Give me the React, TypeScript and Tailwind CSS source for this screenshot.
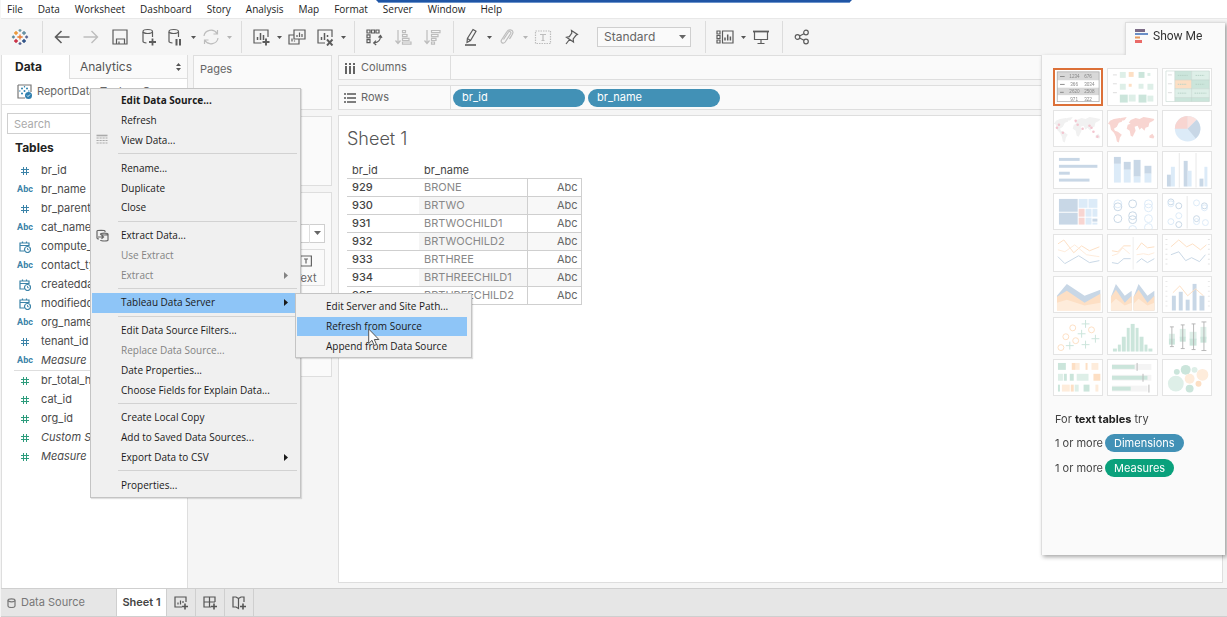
import type { ReactNode } from "react";
import clsx from "clsx";

type FieldType = "num" | "abc" | "date";

interface Field {
  name: string;
  type: FieldType;
  italic?: boolean;
}

interface MenuEntry {
  label: string;
  bold?: boolean;
  disabled?: boolean;
  submenu?: boolean;
  active?: boolean;
  icon?: ReactNode;
}

const DIMENSIONS: Field[] = [
  { name: "br_id", type: "num" },
  { name: "br_name", type: "abc" },
  { name: "br_parent_id", type: "num" },
  { name: "cat_name", type: "abc" },
  { name: "compute_date", type: "date" },
  { name: "contact_type", type: "abc" },
  { name: "createddate", type: "date" },
  { name: "modifieddate", type: "date" },
  { name: "org_name", type: "abc" },
  { name: "tenant_id", type: "num" },
  { name: "Measure Names", type: "abc", italic: true },
];

const MEASURES: Field[] = [
  { name: "br_total_hours", type: "num" },
  { name: "cat_id", type: "num" },
  { name: "org_id", type: "num" },
  { name: "Custom SQL", type: "num", italic: true },
  { name: "Measure Values", type: "num", italic: true },
];

const ROWS = [
  ["929", "BRONE"],
  ["930", "BRTWO"],
  ["931", "BRTWOCHILD1"],
  ["932", "BRTWOCHILD2"],
  ["933", "BRTHREE"],
  ["934", "BRTHREECHILD1"],
  ["935", "BRTHREECHILD2"],
];

const APP_MENU = ["File", "Data", "Worksheet", "Dashboard", "Story", "Analysis", "Map", "Format", "Server", "Window", "Help"];

function Icon({ children, size = 18, className }: { children: ReactNode; size?: number; className?: string }) {
  return (
    <svg
      width={size}
      height={size}
      viewBox={`0 0 ${size} ${size}`}
      fill="none"
      stroke="currentColor"
      strokeWidth="1.2"
      className={clsx("shrink-0", className)}
      aria-hidden="true"
    >
      {children}
    </svg>
  );
}

function Logo() {
  const plus = (x: number, y: number, r: number, c: string) => (
    <path key={`${x}-${y}`} d={`M${x - r} ${y}h${r * 2}M${x} ${y - r}v${r * 2}`} stroke={c} strokeWidth="1.3" />
  );
  return (
    <Icon>
      {plus(9, 9, 2.6, "#e8762c")}
      {plus(5, 5, 1.9, "#eb912c")}
      {plus(13, 5, 1.9, "#5b879b")}
      {plus(5, 13, 1.9, "#c72037")}
      {plus(13, 13, 1.9, "#1f457e")}
      {plus(9, 2.4, 1.5, "#7099a6")}
      {plus(9, 15.6, 1.5, "#5b6591")}
      {plus(2.4, 9, 1.5, "#5b879b")}
      {plus(15.6, 9, 1.5, "#5b6591")}
    </Icon>
  );
}

function Caret({ dim }: { dim?: boolean }) {
  return (
    <button type="button" aria-label="More options" className={clsx("flex h-6 w-[14px] items-center justify-center", dim ? "text-[#b5b5b5]" : "text-[#555]")}>
      <svg width="5" height="3" viewBox="0 0 5 3" fill="currentColor">
        <path d="M0 0h5L2.5 3z" />
      </svg>
    </button>
  );
}

function Tool({ label, dim, children }: { label: string; dim?: boolean; children: ReactNode }) {
  return (
    <button type="button" aria-label={label} className={clsx("flex h-6 w-[22px] items-center justify-center", dim ? "text-[#bdbdbd]" : "text-[#5c5c5c]")}>
      <Icon>{children}</Icon>
    </button>
  );
}

function Divider() {
  return <div className="h-8 w-px bg-[#dcdcdc]" />;
}

function Toolbar() {
  return (
    <div role="toolbar" className="flex h-[37px] shrink-0 items-center border-t border-[#e8e8e8] bg-[#f5f5f5]">
      <div className="flex w-[41px] justify-center pr-[3px]">
        <Logo />
      </div>
      <Divider />
      <div className="flex gap-[7px] pl-2">
        <Tool label="Undo"><path d="M16.5 9h-14M8.500 3l-6 6 6 6" strokeWidth="1.6" /></Tool>
        <Tool label="Redo" dim><path d="M1.5 9h14M9.500 3l6 6-6 6" strokeWidth="1.4" /></Tool>
        <Tool label="Save">
          <path d="M2 2h14v14H2zM5.500 16v-5h8v5M8 13.500V16" />
        </Tool>
        <Tool label="New data source">
          <path d="M3 4v9.500c0 .8 1.500 1.300 3.500 1.500M12.500 4v5" />
          <ellipse cx="7.75" cy="3.5" rx="4.75" ry="2" />
          <path d="M12.500 10.500v7M9 14h7" strokeWidth="1.8" />
        </Tool>
      </div>
      <div className="flex pr-[5px] pl-1">
        <Tool label="Pause auto updates">
          <path d="M3 4v9.500c0 .8 1.500 1.300 3.500 1.500M12.500 4v5" />
          <ellipse cx="7.75" cy="3.5" rx="4.75" ry="2" />
          <path d="M10.500 11v6.500M14 11v6.500" strokeWidth="2" />
        </Tool>
        <Caret />
        <Tool label="Run update" dim>
          <path d="M2 8a7 6.500 0 0 1 13-2.500M16 10a7 6.500 0 0 1-13 2.500M15.500 2v4h-4M2.500 16v-4h4" />
        </Tool>
        <Caret dim />
      </div>
      <Divider />
      <div className="flex pl-2">
        <Tool label="New worksheet">
          <path d="M9.500 15H2V2h14v7" />
          <path d="M5.500 12V9M8.500 12V5M11.500 12V7" strokeWidth="1.5" />
          <path d="M14 10.500v7M10.500 14h7" strokeWidth="1.9" />
        </Tool>
        <Caret />
        <Tool label="Duplicate">
          <path d="M6 2h11v9H6zM6 7H1v9h10v-5" />
          <path d="M9 9V7M11.500 9V4.500M14 9V6M4 13.500v-3M6.500 13.500v-1" />
        </Tool>
      </div>
      <div className="flex pr-1 pl-1.5">
        <Tool label="Clear sheet">
          <path d="M9 15H2V2h14v7" />
          <path d="M5.500 12V9M8.500 12V5M11.500 9V7" strokeWidth="1.5" />
          <path d="M11 11.500l5.500 6M16.500 11.500l-5.500 6" strokeWidth="1.9" />
        </Tool>
        <Caret />
      </div>
      <Divider />
      <div className="flex gap-[7px] pr-2.5 pl-2">
        <Tool label="Swap rows and columns">
          <path d="M2 2h3v3H2zM6.500 2h3v3h-3zM11 2h3v3h-3zM2 6.800h3v3H2zM2 11.600h3v3H2z" />
          <path d="M15.500 8c0 4-2.500 6.500-6.500 7M13.500 9.500l2-2 1.500 2.300M11 12.700L8.700 15l2.500 2" />
        </Tool>
        <Tool label="Sort ascending" dim>
          <path d="M4 2v13M1.500 12.500L4 15.500l2.500-3M8.500 2.500h3v2.200h-3zM8.500 6.500h4.500v2.200H8.500zM8.500 10.300h6.500v2.200H8.500zM8.500 14h8.500v2.200H8.500z" />
        </Tool>
        <Tool label="Sort descending" dim>
          <path d="M4 2v13M1.500 12.500L4 15.500l2.500-3M8.500 2.500h8.500v2.200H8.500zM8.500 6.500h6.500v2.200H8.500zM8.500 10.300h4.500v2.200H8.500zM8.500 14h3v2.200h-3z" />
        </Tool>
      </div>
      <Divider />
      <div className="flex pl-1.5">
        <Tool label="Highlight">
          <path d="M11 1.500l3 1.800-5.500 9.200-3.500 2 .4-4zM5.500 10.500l3 2" />
          <path d="M3 17h11" strokeWidth="1.6" />
        </Tool>
        <Caret />
        <Tool label="Group members" dim>
          <path d="M5.500 11.500l5-7.500c1-1.300 3 0 2.200 1.500l-5.500 8.500c-2 2.500-5 .5-3.700-2l5.500-8.500c1.500-2.500 5.500-2 6 .5.300 2-2.500 5-3.500 7" />
        </Tool>
        <Caret dim />
        <Tool label="Show mark labels" dim>
          <path d="M1.500 3h15v12.500h-15z" strokeDasharray="1.5 1" />
          <path d="M6 6.500h6M9 6.500v6M7.500 12.500h3" />
        </Tool>
      </div>
      <div className="flex items-center gap-[15px] pr-3.5 pl-1.5">
        <Tool label="Fix axes">
          <path d="M9.500 2.500l6 4-1.500.8-2.800 3.700.3 3-7-4.700 2.800-.7L9.800 5zM7.500 11.500L4 16" />
        </Tool>
        <div className="relative">
          <select aria-label="Fit" className="block h-5 w-[94px] appearance-none border border-[#cfcfcf] bg-[#fafafa] pl-1.5 text-xs leading-4 text-[#666]">
            <option>Standard</option>
          </select>
          <span className="pointer-events-none absolute inset-y-0 right-0 flex w-[17px] items-center justify-center">
            <svg width="7" height="4" viewBox="0 0 7 4" fill="#666">
              <path d="M0 0h7L3.500 4z" />
            </svg>
          </span>
        </div>
      </div>
      <Divider />
      <div className="flex pr-2.5 pl-2">
        <Tool label="Show/hide cards">
          <path d="M6.500 3H17v12H6.500zM1 3h3v3H1zM1 7.500h3v3H1zM1 12h3v3H1z" />
          <path d="M9 12.500v-3M11.700 12.500v-6M14.400 12.500V8.500" strokeWidth="1.5" />
        </Tool>
        <Caret />
        <Tool label="Presentation mode">
          <path d="M1 3.500h16" strokeWidth="1.8" />
          <path d="M2.500 3.500v8h13v-8M9 11.500V15M5.500 15.500h7" />
        </Tool>
      </div>
      <Divider />
      <div className="pl-2">
        <Tool label="Share">
          <circle cx="4.5" cy="9" r="2.3" />
          <circle cx="13" cy="4.5" r="2.3" />
          <circle cx="13" cy="13.5" r="2.3" />
          <path d="M6.600 8l4.300-2.300M6.600 10l4.300 2.300" />
        </Tool>
      </div>
    </div>
  );
}

function FieldIcon({ type }: { type: FieldType }) {
  if (type === "abc") return <span className="font-[Roboto] text-[9px] font-bold">Abc</span>;
  if (type === "num")
    return (
      <Icon size={10}>
        <path d="M3.500 1v8M6.500 1v8M1 3.500h8M1 6.500h8" strokeWidth="1" />
      </Icon>
    );
  return (
    <Icon size={12}>
      <path d="M5 10H1V2h9v3M1 4.500h9M3.500.5v2M7.500.5v2" />
      <circle cx="8.5" cy="8.5" r="3" />
      <path d="M8.500 7v1.700h1.300" strokeWidth=".9" />
    </Icon>
  );
}

function FieldList({ fields, tone }: { fields: Field[]; tone: string }) {
  return (
    <ul>
      {fields.map((f) => (
        <li key={f.name} className="flex h-[19px] items-center">
          <span className={clsx("flex w-5 justify-center", tone)}>
            <FieldIcon type={f.type} />
          </span>
          <span className={clsx("ml-1.5 whitespace-nowrap", f.italic && "italic")}>{f.name}</span>
        </li>
      ))}
    </ul>
  );
}

function DataPane() {
  return (
    <aside className="w-[187px] shrink-0 overflow-hidden border-x border-[#dedede] bg-white text-[#4a4a4a]">
      <div className="flex h-6 text-xs">
        <button type="button" className="w-[67px] pr-3.5 font-bold text-[#222]">
          Data
        </button>
        <button type="button" className="flex flex-1 items-center justify-between border-b border-l border-[#dedede] bg-[#fafafa] pr-1.5 pl-2.5 text-[#555]">
          Analytics
          <svg width="5" height="8" viewBox="0 0 5 8" fill="#555">
            <path d="M0 3l2.500-3L5 3zM0 5l2.500 3L5 5z" />
          </svg>
        </button>
      </div>
      <div className="flex h-[26px] items-center gap-[5px] border-b border-[#e2e2e2] pl-[15px] text-[11px] whitespace-nowrap text-[#666]">
        <Icon size={15}>
          <path d="M1 1h13v7M8 14H1V1" stroke="#777" />
          <path d="M4 4.500h2M5 3.500v2M9 4.500h2M10 3.500v2M4 9.500h2M5 8.500v2M6.500 7h2M7.500 6v2M7.500 2v1.500M2 7h1.500M11 7h1.500" stroke="#3d8cb5" />
          <circle cx="11.5" cy="11.5" r="3.5" fill="#2f7fae" stroke="none" />
          <path d="M10 11.500l1 1 2-2" stroke="#fff" strokeWidth=".9" />
        </Icon>
        ReportData_Tenkan_Q
      </div>
      <div className="px-[5px] pt-2">
        <input type="search" aria-label="Search" placeholder="Search" className="block h-[21px] w-full border border-[#cfcfcf] px-1.5 text-[11px] placeholder:text-[#aaa]" />
      </div>
      <h2 className="mt-1.5 pl-[13px] text-xs leading-4 font-bold text-[#222]">Tables</h2>
      <div className="mt-[5px] text-[11px]">
        <div className="pl-[13px]">
          <FieldList fields={DIMENSIONS} tone="text-[#3b83a8]" />
        </div>
        <div className="ml-3 border-t border-[#dedede] pl-px">
          <FieldList fields={MEASURES} tone="text-[#2c9c7c]" />
        </div>
      </div>
    </aside>
  );
}

function Cards() {
  return (
    <div className="flex w-[139px] shrink-0 flex-col gap-[6px] text-[11px] text-[#666] *:border *:border-[#dedede] *:bg-[#fafafa]">
      <section className="h-[55px] px-1.5 pt-[5px]">Pages</section>
      <section className="h-[70px] px-1.5 pt-[5px]">Filters</section>
      <section className="flex h-[185px] flex-col px-1.5 pt-[5px]">
        Marks
        <div className="relative mt-[9px]">
          <select aria-label="Mark type" className="block h-[19px] w-full appearance-none border border-[#cfcfcf] bg-white pl-6">
            <option>Automatic</option>
          </select>
          <span className="pointer-events-none absolute inset-y-0 right-0 flex w-4 items-center justify-center border-l border-[#dedede]">
            <svg width="7" height="4" viewBox="0 0 7 4" fill="#666">
              <path d="M0 0h7L3.500 4z" />
            </svg>
          </span>
        </div>
        <div className="mt-1.5 grid grid-cols-3 gap-1">
          {["Color", "Size", "Text"].map((m) => (
            <button key={m} type="button" className="flex h-[37px] flex-col items-center gap-[5px] border border-[#dedede] bg-[#fafafa] pt-[5px] leading-3">
              <Icon size={12}>
                <path d="M.6 1h10.800v10H.6zM4 4h4M6 4v4.500" />
              </Icon>
              {m}
            </button>
          ))}
        </div>
      </section>
    </div>
  );
}

function Shelf({ label, icon, pills }: { label: string; icon: ReactNode; pills: string[] }) {
  return (
    <div className="flex h-[25px] border border-[#dedede] bg-[#fafafa] text-[11px] text-[#666]">
      <div className="flex w-28 items-center gap-[5px] border-r border-[#dedede] pl-[5px]">
        <Icon size={12} className="text-[#555]">
          {icon}
        </Icon>
        {label}
      </div>
      <div className="flex items-center gap-[3px] pl-0.5">
        {pills.map((p) => (
          <span key={p} className="flex h-[18px] w-[132px] items-center rounded-full bg-[#4291b6] pl-[9px] text-white">
            {p}
          </span>
        ))}
      </div>
    </div>
  );
}

function Sheet() {
  return (
    <main className="flex-1 border border-[#dedede] bg-white pl-2">
      <h1 className="pt-2.5 text-lg leading-[26px] font-light text-[#555]">Sheet 1</h1>
      <table className="mt-2.5 border-collapse text-[11px] leading-4 text-[#444]">
        <thead>
          <tr className="h-4 text-left leading-[14px]">
            <th className="w-[72px] p-0 pl-[5px] font-normal">br_id</th>
            <th className="w-[108px] p-0 pl-[5px] font-normal">br_name</th>
            <th className="w-[54px] p-0" aria-label="Value" />
          </tr>
        </thead>
        <tbody>
          {ROWS.map(([id, name]) => (
            <tr key={id} className="group h-[18px] border-y border-[#cfcfcf]">
              <td className="p-0 pl-[5px] font-medium">{id}</td>
              <td className="p-0 pl-[5px] text-[#888] group-even:bg-[#f5f5f5]">{name}</td>
              <td className="border-x border-[#cfcfcf] p-0 pr-[3px] text-right text-[#666] group-even:bg-[#f8f8f8]">Abc</td>
            </tr>
          ))}
        </tbody>
      </table>
    </main>
  );
}

const G1 = "#cbe5db";
const G2 = "#deefe8";
const O1 = "#fddfc4";
const O2 = "#feecdb";
const B1 = "#c8d7e6";
const B2 = "#dcebf8";
const R1 = "#f8d5d1";

type Box = [number, number, number, number, string];

function Boxes({ items }: { items: Box[] }) {
  return (
    <>
      {items.map(([x, y, w, h, c], i) => (
        <rect key={i} x={x} y={y} width={w} height={h} fill={c} />
      ))}
    </>
  );
}

function Rings({ items }: { items: [number, number, string][] }) {
  return (
    <>
      {items.map(([cx, cy, c], i) => (
        <circle key={i} cx={cx} cy={cy} r="4" fill="none" stroke={c} />
      ))}
    </>
  );
}

const LAND =
  "M2 10l4-2 6-1 3 1-1 3-3 1-2 4-3 2 1 2 3 1 4 3-2 3-1 5-2-1-1-5-2-4-3-3-1-5-2-1zM13 7l6-1-2 3-2 1zM21 12l2-3 5-2 4 1 4-2 6 1 5 1-1 2-4 2-1 4-3 1-1 3-3-3-2 2-2-4-3 1 1 4-3 6-2-1-1-5-3-2 1-4 3-1zM42 25l3-2 2 3-1 2-4-1z";

const THUMBS: { name: string; art: ReactNode }[] = [
  {
    name: "text table",
    art: (
      <>
        <Boxes items={[[2, 2, 45, 9, "#d8d8d8"], [2, 19, 45, 8, "#d8d8d8"]]} />
        <rect x="2" y="2" width="45" height="32" fill="none" stroke="#a8a8a8" strokeWidth=".8" />
        <path d="M5 7h5M5 15.500h5M5 24h4" stroke="#888" />
        <g fill="#888" fontSize="5" fontFamily="Liberation Sans">
          <text x="15" y="9">1234</text>
          <text x="31" y="9">676</text>
          <text x="16" y="17">366</text>
          <text x="31" y="17">3034</text>
          <text x="15" y="25">2620</text>
          <text x="31" y="25">2508</text>
          <text x="16" y="33">971</text>
          <text x="31" y="33">322</text>
        </g>
      </>
    ),
  },
  {
    name: "heat map",
    art: (
      <>
        <Boxes items={[[12, 3, 6, 6, G2], [21, 3, 5, 5, O1], [31, 3, 6, 6, G1], [40, 4, 3, 3, G2], [12, 15, 6, 6, G2], [21, 15, 3, 3, O1], [31, 15, 5, 5, G2], [40, 15, 6, 6, G2], [12, 26, 8, 8, G1], [21, 26, 7, 7, G2], [31, 26, 8, 8, G1], [40, 27, 6, 6, G2]]} />
        <path d="M5 6h4M5 15h4M5 24h4" stroke="#ddd" />
      </>
    ),
  },
  {
    name: "highlight table",
    art: (
      <>
        <Boxes items={[[12, 2, 17, 9, G1], [29, 2, 18, 9, G2], [12, 11, 17, 9, O1], [29, 11, 18, 9, G1], [12, 20, 17, 9, G2], [29, 20, 18, 9, G2], [12, 29, 35, 4, G1]]} />
        <path d="M3 2h44v31H3zM12 2v31M29 2v31M12 11h35M12 20h35M12 29h35" stroke="#c4d5cd" strokeWidth=".6" fill="none" />
        <path d="M5 6h4M5 15h4M5 24h4" stroke="#ddd" />
        <path d="M15 6.500h10M33 6.500h9M15 15.500h9M33 15.500h9M15 24.500h9M32 24.500h12" stroke="#b8d2c7" strokeDasharray="1.5 .7" />
      </>
    ),
  },
  {
    name: "symbol map",
    art: (
      <>
        <path d={LAND} fill="#f1f1f1" />
        {[[3, 17], [5, 14], [9, 22], [22, 10], [24, 14], [29, 18], [36, 15], [38, 17], [40, 21], [44, 26]].map(([x, y]) => (
          <circle key={x} cx={x} cy={y} r="1.3" fill="#f3c5cf" />
        ))}
      </>
    ),
  },
  { name: "map", art: <path d={LAND} fill={R1} /> },
  {
    name: "pie chart",
    art: (
      <>
        <circle cx="25" cy="18" r="13" fill={B2} />
        <path d="M25 18V5A13 13 0 0 0 12 18z" fill={R1} />
        <path d="M25 18V5a13 13 0 0 1 9.200 3.800z" fill="#fbe2df" />
        <path d="M25 18l9.200-9.200a13 13 0 0 1-1 19z" fill={B1} />
      </>
    ),
  },
  { name: "horizontal bars", art: <Boxes items={[[5, 6, 21, 3, B1], [5, 13, 39, 3, B1], [5, 20, 11, 3, B1], [5, 27, 31, 3, B1]]} /> },
  {
    name: "stacked bars",
    art: <Boxes items={[[6, 5, 7, 7, B1], [6, 12, 7, 19, B2], [16, 10, 7, 8, B1], [16, 18, 7, 13, B2], [26, 8, 7, 17, B1], [26, 25, 7, 6, B2], [37, 14, 7, 8, B1], [37, 22, 7, 9, B2]]} />,
  },
  {
    name: "side-by-side bars",
    art: (
      <>
        <path d="M16.500 1v35M33.500 1v35" stroke="#e8e8e8" />
        <Boxes items={[[4, 23, 4, 12, B1], [8, 15, 4, 20, B2], [21, 9, 4, 26, B1], [25, 19, 4, 16, B2], [37, 27, 4, 8, B1], [42, 15, 3, 20, B2]]} />
      </>
    ),
  },
  {
    name: "treemap",
    art: <Boxes items={[[5, 5, 19, 13, B1], [5, 19, 19, 12, B1], [25, 5, 9, 9, B2], [35, 5, 9, 9, B2], [25, 15, 6, 8, R1], [32, 15, 6, 8, B2], [39, 15, 5, 8, B2], [25, 24, 6, 7, R1], [32, 24, 6, 7, B2], [39, 25, 5, 3, B1], [39, 29, 5, 2, B2]]} />,
  },
  {
    name: "circle views",
    art: <Rings items={[[10, 10, B2], [10, 13, B1], [25, 10, B1], [41, 10, B2], [41, 14, B2], [10, 25, B1], [25, 22, B1], [25, 26, B1], [41, 25, B2], [25, 36, B2], [41, 34, B2]]} />,
  },
  {
    name: "side-by-side circles",
    art: (
      <>
        <path d="M24.500 2v33" stroke="#e8e8e8" />
        {[[8, 8, B1], [8, 10, B2], [16, 12, B1], [16, 22, B2], [8, 28, B2], [16, 31, B1], [34, 9, B2], [42, 12, B1], [42, 14, B2], [34, 25, B1], [34, 28, B2], [43, 29, B2]].map(([x, y, c]) => (
          <circle key={`${x}-${y}`} cx={x} cy={y} r="3" fill="none" stroke={String(c)} />
        ))}
      </>
    ),
  },
  {
    name: "continuous lines",
    art: (
      <g fill="none">
        <path d="M4 9l6-4 10 13 8-7 8 5 10-4" stroke={O1} />
        <path d="M4 15l7 2 10-7 12 10 13 2" stroke={O2} />
        <path d="M4 22l7 7 14-8 11 7 10-2" stroke={B1} />
      </g>
    ),
  },
  {
    name: "discrete lines",
    art: (
      <g fill="none">
        <path d="M25.500 2v33" stroke="#eee" />
        <path d="M4 16l6 1 6-6 7 0M29 15l5-7 6 5 7-1" stroke={O1} />
        <path d="M4 21l6-2 5-6 7 6M29 20l7-1 5 1 6-2" stroke={O2} />
        <path d="M4 28l6 1 6-5 7 0M29 28l5-4 6 4 7-4" stroke={B1} />
      </g>
    ),
  },
  {
    name: "dual lines",
    art: (
      <g fill="none">
        <path d="M3.500 4v29M46.500 4v29" stroke="#e4e4e4" strokeDasharray="1 4" strokeWidth="2" />
        <path d="M8 12l8-7 8 7 6-3 8 6 6-5" stroke={O1} />
        <path d="M8 20l8-3 7 9 6-3 8 4 6-7" stroke={B1} />
      </g>
    ),
  },
  {
    name: "area charts, continuous",
    art: (
      <>
        <path d="M3 19l10-12 18 12 16-6v13L31 27 13 15 3 21z" fill={B1} />
        <path d="M3 20l10-6 18 12 16-9v17H3z" fill={O1} />
        <path d="M3 26l10-3 18 6 16-3v8H3z" fill={O2} />
      </>
    ),
  },
  {
    name: "area charts, discrete",
    art: (
      <>
        <path d="M3 20l5-13 9 12 7-5v20H3zM26 20l5-13 9 12 7-5v20H26z" fill={B1} />
        <path d="M3 20l5-7 9 13 7-7v15H3zM26 20l5-7 9 13 7-7v15H26z" fill={O1} />
        <path d="M3 27l5-5 9 7 7-3v8H3zM26 27l5-5 9 7 7-3v8H26z" fill={O2} />
      </>
    ),
  },
  {
    name: "dual combination",
    art: (
      <>
        <path d="M3.500 4v29M46.500 4v29" stroke="#e8e8e8" strokeDasharray="1 4" strokeWidth="2" />
        <Boxes items={[[9, 19, 4, 15, B1], [16, 15, 4, 19, B1], [23, 23, 4, 11, B1], [30, 7, 4, 27, B1], [37, 19, 5, 15, B1]]} />
        <path d="M10 16l7-7 8 10 8-7 8 7" stroke={O1} fill="none" />
      </>
    ),
  },
  {
    name: "scatter plot",
    art: (
      <>
        <g fill="none" stroke={O1}>
          <circle cx="19" cy="10" r="3" />
          <circle cx="38" cy="12" r="3" />
          <circle cx="12" cy="19" r="3" />
          <circle cx="22" cy="23" r="3" />
          <circle cx="7" cy="30" r="3" />
        </g>
        <path d="M28 6h8M32 2v8M24 16h8M28 12v8M38 21h8M42 17v8M12 28h8M16 24v8M28 27h8M32 23v8" stroke={G1} />
      </>
    ),
  },
  {
    name: "histogram",
    art: <Boxes items={[[5, 31, 4, 3, G1], [10, 27, 3, 7, G1], [14, 19, 4, 15, G1], [19, 10, 3, 24, G1], [23, 6, 4, 28, G1], [28, 10, 3, 24, G1], [32, 19, 4, 15, G1], [37, 27, 3, 7, G1], [41, 31, 4, 3, G1]]} />,
  },
  {
    name: "box-and-whisker plot",
    art: (
      <>
        <Boxes items={[[6, 16, 6, 6, G2], [6, 21, 6, 6, G1], [17, 11, 6, 9, G2], [17, 19, 6, 5, G1], [27, 14, 7, 8, G2], [27, 21, 7, 7, G1], [38, 9, 6, 12, G2], [38, 19, 6, 6, G1]]} />
        <path d="M9 9v20M7 9h4M7 29h4M20 7v24M18 7h4M18 31h4M31 6v26M29 6h4M29 32h4M41.500 4v29M39 4h5M39 33h5" stroke="#b0b0b0" strokeWidth=".9" />
      </>
    ),
  },
  {
    name: "gantt",
    art: <Boxes items={[[4, 3, 8, 7, G1], [18, 3, 4, 7, O1], [22, 3, 4, 7, O2], [32, 3, 2, 7, O1], [38, 3, 7, 7, O2], [4, 14, 5, 7, G2], [10, 14, 3, 7, G1], [16, 14, 4, 7, G1], [23, 14, 12, 7, G2], [40, 14, 7, 7, O1], [4, 25, 2, 7, G1], [8, 25, 8, 7, O2], [17, 25, 3, 7, O1], [21, 25, 4, 7, G2], [30, 25, 6, 7, G1], [42, 25, 3, 7, O2]]} />,
  },
  {
    name: "bullet graph",
    art: (
      <>
        <Boxes items={[[4, 4, 40, 6, "#f4f4f4"], [4, 15, 40, 6, "#f4f4f4"], [4, 26, 36, 6, "#f4f4f4"], [4, 5, 23, 4, G1], [4, 16, 36, 4, G1], [4, 27, 19, 4, G1]]} />
        <path d="M29.500 3v8M35.500 14v8M41.500 25v8" stroke="#bbb" />
      </>
    ),
  },
  {
    name: "packed bubbles",
    art: (
      <>
        <circle cx="13" cy="24" r="8" fill={G2} />
        <circle cx="23" cy="10" r="5" fill={G1} />
        <circle cx="14" cy="12" r="3" fill={G1} />
        <circle cx="32" cy="10" r="3" fill={G2} />
        <circle cx="40" cy="15" r="6" fill={O2} />
        <circle cx="27" cy="19" r="5" fill={O2} />
        <circle cx="36" cy="24" r="3" fill={O1} />
        <circle cx="27" cy="29" r="4" fill={G1} />
      </>
    ),
  },
];

function ShowMe() {
  return (
    <aside className="absolute top-1 right-0.5 w-[184px] text-[11px] text-[#444] drop-shadow-[2px_2px_2px_rgba(0,0,0,0.35)]">
      <button type="button" className="ml-auto flex h-[33px] w-[100px] items-center gap-[5px] border-t border-l border-[#dedede] bg-[#fafafa] pb-1.5 pl-[9px] font-[Roboto] text-xs whitespace-nowrap text-[#333]">
        <svg width="13" height="14" viewBox="0 0 13 14">
          <path d="M0 0h10v3H0z" fill="#7b6a86" />
          <path d="M0 4h13v2H0z" fill="#6a8fc7" />
          <path d="M0 7.500h5v2H0z" fill="#e79a5c" />
          <path d="M0 11h7v3H0z" fill="#ea6a68" />
        </svg>
        Show Me
      </button>
      <div className="h-[500px] border-l border-[#dedede] bg-[#fafafa] px-[11px] pt-[13px]">
        <div className="grid h-[328px] w-[159px] grid-cols-3 grid-rows-8 gap-1">
          {THUMBS.map((t, i) => (
            <button
              key={t.name}
              type="button"
              aria-label={t.name}
              className={clsx("overflow-hidden bg-white", i === 0 ? "border-2 border-[#dc7038]" : "border border-[#e4e4e4]")}
            >
              <svg viewBox="0 0 49 36" className="block size-full">
                {t.art}
              </svg>
            </button>
          ))}
        </div>
        <p className="mt-[15px] pl-0.5 leading-4">
          For <b className="text-[#222]">text tables</b> try
        </p>
        <p className="mt-[7px] flex items-center gap-0.5 pl-0.5">
          1 or more
          <span className="flex h-[18px] items-center rounded-full bg-[#4291b6] px-[9px] text-white">Dimensions</span>
        </p>
        <p className="mt-[7px] flex items-center gap-0.5 pl-0.5">
          1 or more
          <span className="flex h-[18px] items-center rounded-full bg-[#0aa17c] px-[9px] text-white">Measures</span>
        </p>
      </div>
    </aside>
  );
}

const ViewDataIcon = (
  <Icon size={12} className="text-[#aaa]">
    <path d="M.5 1.500h11" strokeWidth="1.6" />
    <path d="M.5 4h11M.5 6.500h11M.5 9h11" strokeDasharray="2.2 .8" />
  </Icon>
);

const ExtractIcon = (
  <Icon size={13} className="text-[#666]">
    <path d="M9 3V2c0-1-8-1-8 0v7c0 .6 1 1 2 1" />
    <path d="M4.500 5c0-1.300 7.500-1.300 7.500 0v6c0 1.300-7.500 1.300-7.500 0M4.500 5c0 1.300 7.500 1.300 7.500 0M2 8h5M5.500 6.300L7.500 8l-2 1.700" />
  </Icon>
);

const MENU_GROUPS: MenuEntry[][] = [
  [{ label: "Edit Data Source...", bold: true }, { label: "Refresh" }, { label: "View Data...", icon: ViewDataIcon }],
  [{ label: "Rename..." }, { label: "Duplicate" }, { label: "Close" }],
  [
    { label: "Extract Data...", icon: ExtractIcon },
    { label: "Use Extract", disabled: true },
    { label: "Extract", disabled: true, submenu: true },
  ],
  [{ label: "Tableau Data Server", submenu: true, active: true }],
  [
    { label: "Edit Data Source Filters..." },
    { label: "Replace Data Source...", disabled: true },
    { label: "Date Properties..." },
    { label: "Choose Fields for Explain Data..." },
  ],
  [{ label: "Create Local Copy" }, { label: "Add to Saved Data Sources..." }, { label: "Export Data to CSV", submenu: true }],
  [{ label: "Properties..." }],
];

function MenuItem({ entry }: { entry: MenuEntry }) {
  return (
    <button
      type="button"
      role="menuitem"
      disabled={entry.disabled}
      className={clsx(
        "mr-1 ml-px flex min-h-0 flex-1 items-center whitespace-nowrap",
        entry.bold && "font-bold",
        entry.disabled ? "text-[#838383]" : "text-[#1a1a1a]",
        entry.active && "bg-[#8ec5f7]",
      )}
    >
      <span className="flex w-[29px] items-center pl-1">{entry.icon}</span>
      {entry.label}
      {entry.submenu && (
        <svg width="4" height="7" viewBox="0 0 4 7" className="mr-2 ml-auto" fill="currentColor">
          <path d="M0 0v7l4-3.500z" />
        </svg>
      )}
    </button>
  );
}

function ContextMenu() {
  return (
    <div className="absolute top-[88px] left-[90px] font-['Open_Sans'] text-[10px]">
      <div role="menu" className="flex h-[410px] w-[211px] flex-col border border-[#c4c4c4] bg-[#f0f0f0] py-0.5 shadow-[1px_1px_1px_rgba(0,0,0,0.12)]">
        {MENU_GROUPS.flatMap((group, g) => [
          g > 0 && <div key={`sep-${g}`} className="mr-[3px] mb-1 ml-[27px] h-1 shrink-0 border-b border-[#d2d2d2]" />,
          ...group.map((entry) => <MenuItem key={entry.label} entry={entry} />),
        ])}
      </div>
      <div role="menu" className="absolute top-[205px] left-[205px] flex h-[65px] w-[177px] flex-col border border-[#c4c4c4] bg-[#f0f0f0] pt-[3px] pb-px shadow-[1px_1px_1px_rgba(0,0,0,0.12)]">
        <MenuItem entry={{ label: "Edit Server and Site Path..." }} />
        <MenuItem entry={{ label: "Refresh from Source", active: true }} />
        <MenuItem entry={{ label: "Append from Data Source" }} />
      </div>
      <svg width="12" height="19" viewBox="0 0 12 19" className="absolute top-[240px] left-[278px]">
        <path d="M.7 1v14.500l3.300-3.200 2.200 5.200 2.300-1-2.200-5h4.600z" fill="#fff" stroke="#555" />
      </svg>
    </div>
  );
}

function SheetTabs() {
  return (
    <nav className="flex h-[29px] shrink-0 border-y border-[#cfcfcf] bg-[#e6e6e6] text-[11px] text-[#555] *:border-r *:border-[#cfcfcf]">
      <button type="button" className="flex w-[116px] items-center gap-1 pl-1.5 text-[#777]">
        <Icon size={10}>
          <path d="M1 2.500v5.500c0 2 7 2 7 0V2.500" />
          <ellipse cx="4.5" cy="2.3" rx="3.5" ry="1.5" />
        </Icon>
        Data Source
      </button>
      <button type="button" className="w-[50px] bg-white font-semibold whitespace-nowrap text-[#444]">
        Sheet 1
      </button>
      <button type="button" aria-label="New worksheet" className="flex w-[29px] items-center justify-center">
        <Icon size={14}>
          <path d="M8 11H1V1h11v5" />
          <path d="M4 8.500v-2M6.500 8.500v-4M9 7V5" />
          <path d="M11 7.500v6M8 10.500h6" strokeWidth="1.6" />
        </Icon>
      </button>
      <button type="button" aria-label="New dashboard" className="flex w-[29px] items-center justify-center">
        <Icon size={14}>
          <path d="M8 11H1V1h11v5M6.500 1v10M1 6h11" />
          <path d="M11 7.500v6M8 10.500h6" strokeWidth="1.6" />
        </Icon>
      </button>
      <button type="button" aria-label="New story" className="flex w-[29px] items-center justify-center">
        <Icon size={14}>
          <path d="M6.500 2.500L4 1H1v10h3l2.500 1.500zM6.500 2.500L9 1h3v5" />
          <path d="M11 7.500v6M8 10.500h6" strokeWidth="1.6" />
        </Icon>
      </button>
    </nav>
  );
}

export default function App() {
  return (
    <div className="relative flex h-screen flex-col overflow-hidden bg-[#f5f5f5] pl-px font-[Inter,sans-serif]">
      <div className="absolute top-0 left-[376px] h-[3px] w-[476px] border-b border-[#6b93cc] bg-[#1f55a5] [clip-path:polygon(0_0,100%_0,calc(100%-3px)_100%,3px_100%)]" />
      <nav className="flex h-[18px] shrink-0 items-center gap-[15px] bg-white pl-1.5 font-['Open_Sans'] text-[10px] text-[#222]">
        {APP_MENU.map((m) => (
          <button key={m} type="button">
            {m}
          </button>
        ))}
      </nav>
      <div className="relative flex min-h-0 flex-1 flex-col">
        <Toolbar />
        <div className="flex min-h-0 flex-1">
          <DataPane />
          <div className="w-[5px] shrink-0" />
          <Cards />
          <div className="flex min-w-0 flex-1 flex-col gap-[5px] pr-1 pb-[5px] pl-[6px]">
            <Shelf label="Columns" icon={<path d="M2 1v2M2 4v8M6 1v2M6 4v8M10 1v2M10 4v8" strokeWidth="1.8" />} pills={[]} />
            <Shelf label="Rows" icon={<path d="M0 2h2M3 2h9M0 6h2M3 6h9M0 10h2M3 10h9" strokeWidth="1.6" />} pills={["br_id", "br_name"]} />
            <Sheet />
          </div>
        </div>
        <ShowMe />
      </div>
      <SheetTabs />
      <ContextMenu />
    </div>
  );
}
